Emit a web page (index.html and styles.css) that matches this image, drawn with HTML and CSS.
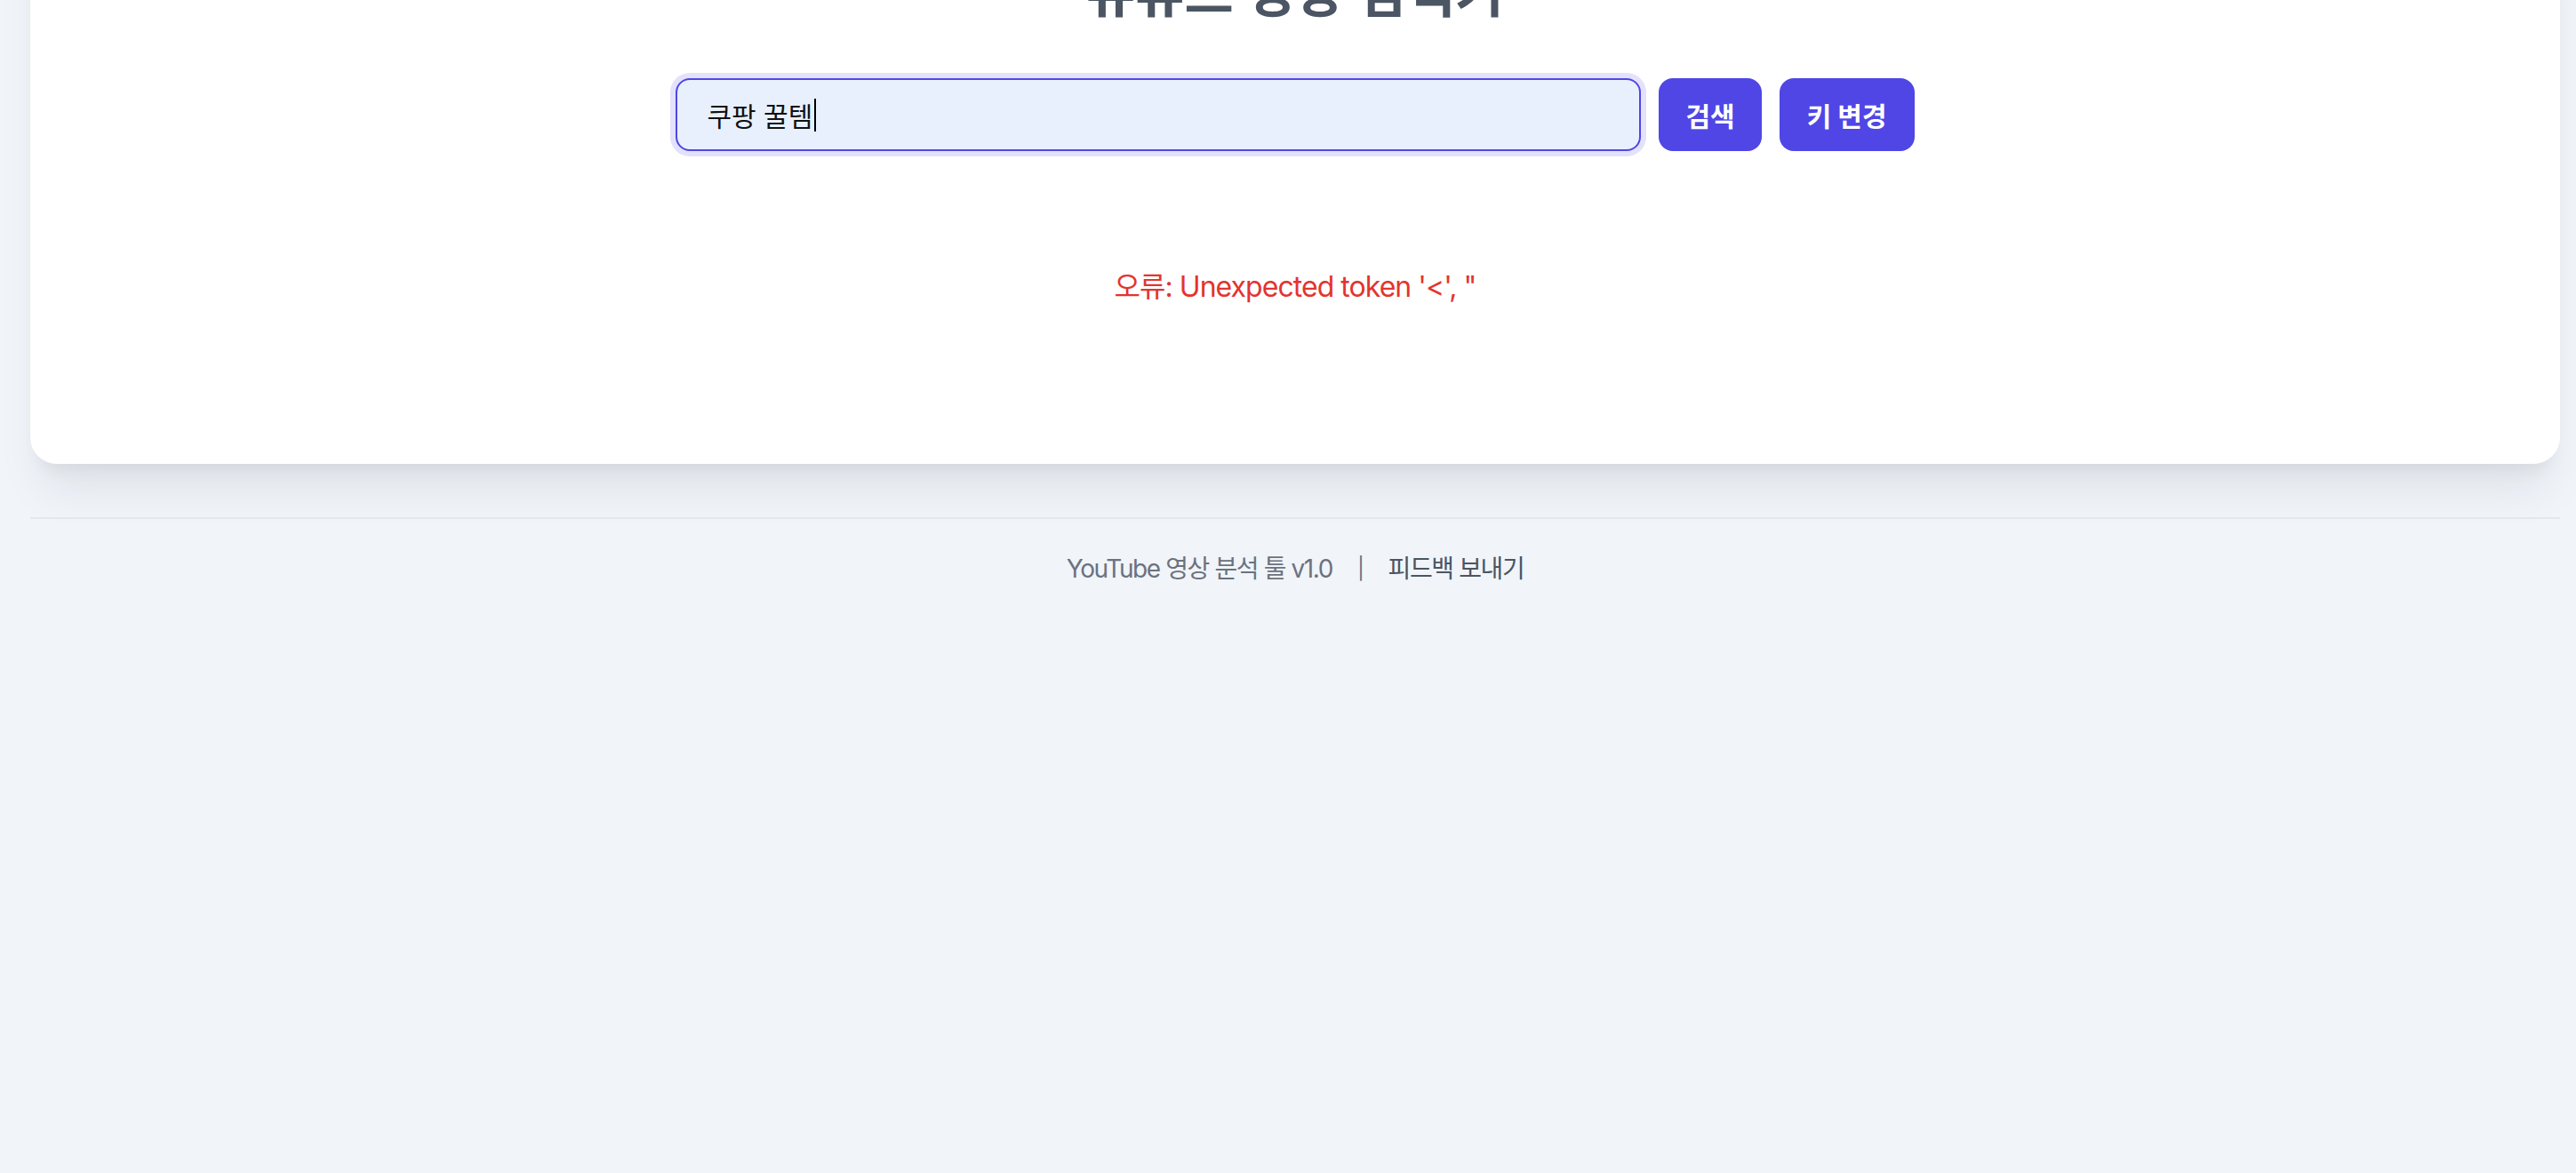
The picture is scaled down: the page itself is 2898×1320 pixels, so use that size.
FILE: index.html
```html
<!DOCTYPE html>
<html lang="ko">
<head>
<meta charset="utf-8">
<title>유튜브 영상 검색기</title>
<link rel="stylesheet" href="styles.css">
</head>
<body>
<div class="page">
  <main class="card">
    <h1 class="title">유튜브 영상 검색기</h1>
    <div class="search-row">
      <div class="search-box" role="textbox"><span class="query">쿠팡 꿀템</span><span class="caret"></span></div>
      <button class="btn" type="button">검색</button>
      <button class="btn" type="button">키 변경</button>
    </div>
    <div class="status">
      <p class="error">오류: Unexpected token '&lt;', "</p>
    </div>
  </main>
  <footer class="footer">
    <span class="footer-text">YouTube 영상 분석 툴 v1.0</span>
    <span class="sep">|</span>
    <a class="footer-link" href="#">피드백 보내기</a>
  </footer>
</div>
</body>
</html>
```
FILE: styles.css
```css
html, body {
  margin: 0;
  padding: 0;
}
body {
  background: #f1f4f9;
  font-family: Inter, "Noto Sans CJK KR", sans-serif;
  overflow: hidden;
}
.page {
  padding: 0 18px 0 34px;
  margin-top: -104px;
}
.card {
  background: #ffffff;
  border-radius: 30px;
  box-shadow: 0 40px 50px -10px rgba(15, 23, 42, 0.07), 0 16px 20px -12px rgba(15, 23, 42, 0.08);
  padding: 64px 64px 0;
  text-align: center;
}
.title {
  margin: 0 0 64px;
  font-size: 60px;
  line-height: 64px;
  font-weight: 700;
  color: #4b5563;
}
.search-row {
  display: flex;
  justify-content: center;
  gap: 20px;
}
.search-box {
  box-sizing: border-box;
  width: 1086px;
  height: 82px;
  display: flex;
  align-items: center;
  padding: 0 33px;
  border: 2px solid #4f46e5;
  border-radius: 16px;
  background: #e8f0fe;
  box-shadow: 0 0 0 6px #e3e1fb;
  font-size: 30px;
  color: #111111;
  text-align: left;
}
.caret {
  display: inline-block;
  width: 2px;
  height: 37px;
  background: #000000;
  margin-left: 2px;
}
.btn {
  height: 82px;
  padding: 0 30px;
  border: none;
  border-radius: 16px;
  background: #4f46e5;
  color: #ffffff;
  font-family: Inter, "Noto Sans CJK KR", sans-serif;
  font-size: 30px;
  font-weight: 700;
}
.btn + .btn {
  padding: 0 31px;
}
.status {
  padding: 129px 0 175px;
}
.error {
  margin: 0;
  font-size: 32px;
  line-height: 48px;
  letter-spacing: -0.03em;
  color: #e3342f;
}
.footer {
  margin-top: 60px;
  border-top: 2px solid #e5e7eb;
  padding-top: 35px;
  display: flex;
  justify-content: center;
  align-items: center;
  font-size: 28px;
  line-height: 42px;
  letter-spacing: -0.05em;
  color: #6b7280;
}
.sep {
  margin: 0 28px;
  font-size: 24px;
  color: #6b7280;
}
.footer-link {
  color: #4b5563;
  text-decoration: none;
}
```
